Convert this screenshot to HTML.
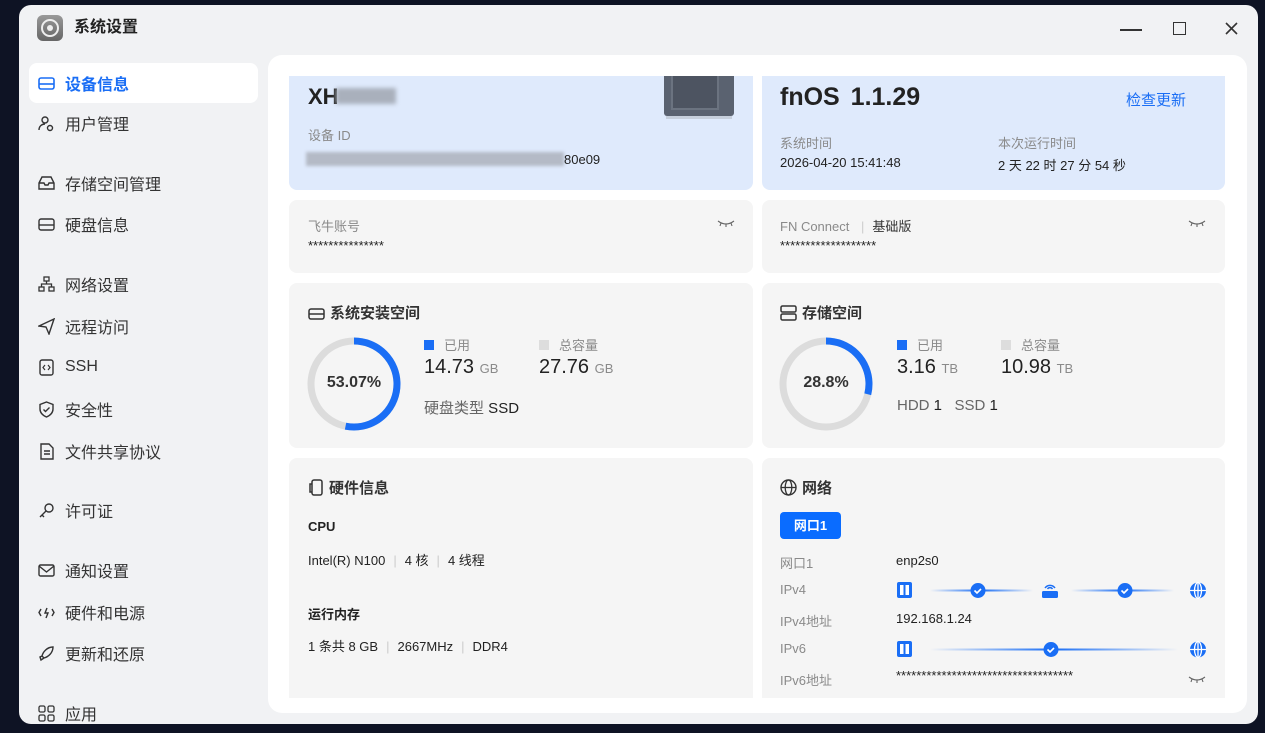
<!DOCTYPE html><html><head><meta charset="utf-8"><style>
*{margin:0;padding:0;box-sizing:border-box}
body{width:1265px;height:730px;overflow:hidden;background:#0e1324;font-family:"Liberation Sans","Noto Sans CJK SC",sans-serif;position:relative;color:#222}
.a{position:absolute}
.win{left:19px;top:5px;width:1239px;height:719px;background:#f1f2f4;border-radius:12px;overflow:hidden}
.nav{left:29px;width:229px;height:40px;border-radius:8px;font-size:16px;color:#333;display:flex;align-items:center;padding-left:36px}
.nav svg{position:absolute;left:9px;top:12px}
.panel{left:268px;top:55px;width:979px;height:658px;background:#fff;border-radius:14px;overflow:hidden}
.card{background:#f5f5f5;border-radius:8px}
.blue{background:#dfeafc}
.g{color:#8a8a8a}
.t{font-size:13px}
.h{font-size:15px;font-weight:bold;color:#333}
.h svg{vertical-align:-3px;margin-right:5px}
.sep{color:#ccc;margin:0 8px}
</style></head><body>
<div class="a win">
 <div class="a" style="left:18px;top:10px;width:26px;height:26px;border-radius:6px;background:linear-gradient(#999,#666)"><svg width="26" height="26"><circle cx="13" cy="13" r="8" fill="none" stroke="#eee" stroke-width="2"/><circle cx="13" cy="13" r="3" fill="#eee"/></svg></div>
 <div class="a" style="left:55px;top:14px;font-size:16px;font-weight:bold;line-height:18px">系统设置</div>
 <div class="a" style="left:1101px;top:24px;width:22px;height:2px;background:#333"></div>
 <div class="a" style="left:1154px;top:17px;width:13px;height:13px;border:1.6px solid #333"></div>
 <svg class="a" style="left:1206px;top:17px" width="13" height="13"><path d="M1 1l11 11M12 1L1 12" stroke="#333" stroke-width="1.6"/></svg>
</div>
<div class="a nav" style="top:63px;background:#fff;color:#1a6ef5;font-weight:bold"><svg width="17" height="15"><rect x="1" y="3" width="15" height="11" rx="2" fill="none" stroke="#1a6ef5" stroke-width="1.6"/><line x1="1" y1="9" x2="16" y2="9" stroke="#1a6ef5" stroke-width="1.6"/></svg>设备信息</div>
<div class="a nav" style="top:103px"><svg width="17" height="17"><circle cx="7" cy="5" r="3" fill="none" stroke="#333" stroke-width="1.4"/><path d="M1 15c0-4 3-6 6-6" fill="none" stroke="#333" stroke-width="1.4"/><circle cx="12" cy="13" r="2.5" fill="none" stroke="#333" stroke-width="1.4"/></svg>用户管理</div>
<div class="a nav" style="top:163px"><svg width="17" height="15"><path d="M1 8l3-6h9l3 6v6H1z M1 8h5l1 2h3l1-2h5" fill="none" stroke="#333" stroke-width="1.4"/></svg>存储空间管理</div>
<div class="a nav" style="top:204px"><svg width="17" height="15"><rect x="1" y="3" width="15" height="11" rx="2" fill="none" stroke="#333" stroke-width="1.4"/><line x1="1" y1="9" x2="16" y2="9" stroke="#333" stroke-width="1.4"/></svg>硬盘信息</div>
<div class="a nav" style="top:264px"><svg width="17" height="17"><rect x="6" y="1" width="5" height="4" fill="none" stroke="#333" stroke-width="1.3"/><rect x="1" y="11" width="5" height="4" fill="none" stroke="#333" stroke-width="1.3"/><rect x="11" y="11" width="5" height="4" fill="none" stroke="#333" stroke-width="1.3"/><path d="M8.5 5v3M3.5 11V8h10v3" fill="none" stroke="#333" stroke-width="1.3"/></svg>网络设置</div>
<div class="a nav" style="top:306px"><svg width="17" height="17"><path d="M1 8L16 1 11 16 8 9z" fill="none" stroke="#333" stroke-width="1.4"/></svg>远程访问</div>
<div class="a nav" style="top:347px"><svg width="17" height="17"><rect x="2" y="1" width="13" height="15" rx="2" fill="none" stroke="#333" stroke-width="1.4"/><path d="M7 6L5 8.5 7 11M10 6l2 2.5L10 11" fill="none" stroke="#333" stroke-width="1.2"/></svg>SSH</div>
<div class="a nav" style="top:389px"><svg width="17" height="17"><path d="M8.5 1L15 3.5V8c0 4-3 6.5-6.5 8C5 14.5 2 12 2 8V3.5z M5.5 8.5l2 2 4-4" fill="none" stroke="#333" stroke-width="1.4"/></svg>安全性</div>
<div class="a nav" style="top:431px"><svg width="17" height="17"><path d="M3 1h8l4 4v11H3z M6 8h6M6 11h6" fill="none" stroke="#333" stroke-width="1.4"/></svg>文件共享协议</div>
<div class="a nav" style="top:490px"><svg width="17" height="17"><circle cx="11" cy="6" r="4" fill="none" stroke="#333" stroke-width="1.4"/><path d="M8 9l-6 6M4 13l2 2" fill="none" stroke="#333" stroke-width="1.4"/></svg>许可证</div>
<div class="a nav" style="top:550px"><svg width="17" height="17"><rect x="1" y="3" width="15" height="11" rx="1.5" fill="none" stroke="#333" stroke-width="1.4"/><path d="M1 4l7.5 6L16 4" fill="none" stroke="#333" stroke-width="1.4"/></svg>通知设置</div>
<div class="a nav" style="top:592px"><svg width="17" height="17"><path d="M3 5L1 8.5 3 12M14 5l2 3.5L14 12M9 4L7 9h3l-2 5" fill="none" stroke="#333" stroke-width="1.4"/></svg>硬件和电源</div>
<div class="a nav" style="top:633px"><svg width="17" height="17"><path d="M15 2C9 2 5 7 4 11l2 2c4-1 9-5 9-11zM4 11l-2 1 1 3 3-2" fill="none" stroke="#333" stroke-width="1.4"/></svg>更新和还原</div>
<div class="a nav" style="top:693px"><svg width="17" height="17"><rect x="1" y="1" width="6" height="6" rx="1.5" fill="none" stroke="#333" stroke-width="1.3"/><rect x="10" y="1" width="6" height="6" rx="1.5" fill="none" stroke="#333" stroke-width="1.3"/><rect x="1" y="10" width="6" height="6" rx="1.5" fill="none" stroke="#333" stroke-width="1.3"/><rect x="10" y="10" width="6" height="6" rx="1.5" fill="none" stroke="#333" stroke-width="1.3"/></svg>应用</div>

<div class="a panel">
 <div class="a blue" style="left:21px;top:21px;width:464px;height:114px;border-radius:0 0 8px 8px"></div>
 <div class="a" style="left:40px;top:29px;font-size:22px;font-weight:bold">XH</div>
 <div class="a" style="left:68px;top:33px;width:60px;height:16px;background:#a9b0bc;filter:blur(2px)"></div>
 <div class="a g t" style="left:40px;top:70px">设备 ID</div>
 <div class="a" style="left:38px;top:97px;width:258px;height:14px;background:#b4bac6;filter:blur(1.5px)"></div>
 <div class="a t" style="left:296px;top:97px">80e09</div>
 <div class="a" style="left:396px;top:21px;width:70px;height:40px;background:#5a6270;border-radius:0 0 3px 3px"></div>
 <div class="a" style="left:403px;top:21px;width:48px;height:34px;background:#4d5461;border:2px solid #6b7380;border-top:none"></div>
 <div class="a" style="left:398px;top:61px;width:66px;height:3px;background:#c6cfdc"></div>
 <div class="a blue" style="left:494px;top:21px;width:463px;height:114px;border-radius:0 0 8px 8px"></div>
 <div class="a" style="left:512px;top:28px;font-size:25px;font-weight:bold;word-spacing:4px">fnOS 1.1.29</div>
 <div class="a" style="left:858px;top:34px;font-size:15px;color:#1a6ef5">检查更新</div>
 <div class="a g t" style="left:512px;top:78px">系统时间</div>
 <div class="a t" style="left:512px;top:100px">2026-04-20 15:41:48</div>
 <div class="a g t" style="left:730px;top:78px">本次运行时间</div>
 <div class="a t" style="left:730px;top:100px">2 天 22 时 27 分 54 秒</div>

 <div class="a card" style="left:21px;top:145px;width:464px;height:73px"></div>
 <div class="a g t" style="left:40px;top:161px">飞牛账号</div>
 <div class="a t" style="left:40px;top:183px">***************</div>
 <svg class="a" style="left:449px;top:164px" width="18" height="8"><path d="M1 2q8 6 16 0M4 4l-1 3M9 5v3M14 4l1 3" stroke="#666" stroke-width="1.1" fill="none"/></svg>
 <div class="a card" style="left:494px;top:145px;width:463px;height:73px"></div>
 <div class="a g t" style="left:512px;top:161px">FN Connect <span class="sep">|</span><span style="color:#333">基础版</span></div>
 <div class="a t" style="left:512px;top:183px">*******************</div>
 <svg class="a" style="left:920px;top:164px" width="18" height="8"><path d="M1 2q8 6 16 0M4 4l-1 3M9 5v3M14 4l1 3" stroke="#666" stroke-width="1.1" fill="none"/></svg>

 <div class="a card" style="left:21px;top:228px;width:464px;height:165px"></div>
 <div class="a h" style="left:40px;top:247px"><svg width="17" height="15"><rect x="1" y="3" width="15" height="10" rx="2" fill="none" stroke="#333" stroke-width="1.5"/><line x1="1" y1="8" x2="16" y2="8" stroke="#333" stroke-width="1.5"/></svg>系统安装空间</div>
 <svg class="a" style="left:38px;top:281px" width="96" height="96"><circle cx="48" cy="48" r="43" fill="none" stroke="#dcdcdc" stroke-width="7"/><circle cx="48" cy="48" r="43" fill="none" stroke="#1a6ef5" stroke-width="7" stroke-dasharray="143.4 270" transform="rotate(-90 48 48)"/></svg>
 <div class="a" style="left:38px;top:319px;width:96px;text-align:center;font-size:16px;font-weight:bold;color:#333">53.07%</div>
 <div class="a t g" style="left:156px;top:280px"><span style="display:inline-block;width:10px;height:10px;background:#1a6ef5;margin-right:10px"></span>已用</div>
 <div class="a t g" style="left:271px;top:280px"><span style="display:inline-block;width:10px;height:10px;background:#ddd;margin-right:10px"></span>总容量</div>
 <div class="a" style="left:156px;top:301px;font-size:20px">14.73 <span class="g t">GB</span></div>
 <div class="a" style="left:271px;top:301px;font-size:20px">27.76 <span class="g t">GB</span></div>
 <div class="a" style="left:156px;top:342px;font-size:15px"><span style="color:#666">硬盘类型</span> SSD</div>

 <div class="a card" style="left:494px;top:228px;width:463px;height:165px"></div>
 <div class="a h" style="left:512px;top:247px"><svg width="17" height="16"><rect x="1" y="1" width="15" height="6" rx="1.5" fill="none" stroke="#333" stroke-width="1.5"/><rect x="1" y="9" width="15" height="6" rx="1.5" fill="none" stroke="#333" stroke-width="1.5"/></svg>存储空间</div>
 <svg class="a" style="left:510px;top:281px" width="96" height="96"><circle cx="48" cy="48" r="43" fill="none" stroke="#dcdcdc" stroke-width="7"/><circle cx="48" cy="48" r="43" fill="none" stroke="#1a6ef5" stroke-width="7" stroke-dasharray="77.8 270" transform="rotate(-90 48 48)"/></svg>
 <div class="a" style="left:510px;top:319px;width:96px;text-align:center;font-size:16px;font-weight:bold;color:#333">28.8%</div>
 <div class="a t g" style="left:629px;top:280px"><span style="display:inline-block;width:10px;height:10px;background:#1a6ef5;margin-right:10px"></span>已用</div>
 <div class="a t g" style="left:733px;top:280px"><span style="display:inline-block;width:10px;height:10px;background:#ddd;margin-right:10px"></span>总容量</div>
 <div class="a" style="left:629px;top:301px;font-size:20px">3.16 <span class="g t">TB</span></div>
 <div class="a" style="left:733px;top:301px;font-size:20px">10.98 <span class="g t">TB</span></div>
 <div class="a" style="left:629px;top:342px;font-size:15px"><span style="color:#666">HDD</span> 1 &nbsp;&nbsp;<span style="color:#666">SSD</span> 1</div>

 <div class="a card" style="left:21px;top:403px;width:464px;height:240px;border-radius:8px 8px 0 0"></div>
 <div class="a h" style="left:40px;top:422px"><svg width="16" height="17"><rect x="4" y="1" width="10" height="15" rx="2" fill="none" stroke="#333" stroke-width="1.5"/><path d="M4 5H2v8h2" fill="none" stroke="#333" stroke-width="1.5"/></svg>硬件信息</div>
 <div class="a" style="left:40px;top:464px;font-size:13px;font-weight:bold">CPU</div>
 <div class="a t" style="left:40px;top:495px">Intel(R) N100<span class="sep">|</span>4 核<span class="sep">|</span>4 线程</div>
 <div class="a" style="left:40px;top:549px;font-size:13px;font-weight:bold">运行内存</div>
 <div class="a t" style="left:40px;top:581px">1 条共 8 GB<span class="sep">|</span>2667MHz<span class="sep">|</span>DDR4</div>

 <div class="a card" style="left:494px;top:403px;width:463px;height:240px;border-radius:8px 8px 0 0"></div>
 <div class="a h" style="left:512px;top:422px"><svg width="17" height="17"><circle cx="8.5" cy="8.5" r="7.5" fill="none" stroke="#333" stroke-width="1.4"/><ellipse cx="8.5" cy="8.5" rx="3.3" ry="7.5" fill="none" stroke="#333" stroke-width="1.3"/><path d="M1 8.5h15" stroke="#333" stroke-width="1.3"/></svg>网络</div>
 <div class="a" style="left:512px;top:457px;width:61px;height:27px;background:#0a6cff;border-radius:4px;color:#fff;font-size:13px;font-weight:bold;text-align:center;line-height:27px">网口1</div>
 <div class="a g t" style="left:512px;top:498px">网口1</div><div class="a t" style="left:628px;top:498px">enp2s0</div>
 <div class="a g t" style="left:512px;top:527px">IPv4</div>
 <div class="a g t" style="left:512px;top:556px">IPv4地址</div><div class="a t" style="left:628px;top:556px">192.168.1.24</div>
 <div class="a g t" style="left:512px;top:586px">IPv6</div>
 <div class="a g t" style="left:512px;top:615px">IPv6地址</div><div class="a t" style="left:628px;top:613px">***********************************</div>
 <svg class="a" style="left:628px;top:525px" width="315" height="80">
  <defs><linearGradient id="l"><stop offset="0" stop-color="#1a6ef5" stop-opacity="0"/><stop offset=".5" stop-color="#1a6ef5"/><stop offset="1" stop-color="#1a6ef5" stop-opacity="0"/></linearGradient></defs>
  <rect x="1" y="2" width="15" height="16" rx="2" fill="#1a6ef5"/><rect x="4" y="5" width="3.5" height="10" fill="#fff"/><rect x="9.5" y="5" width="3.5" height="10" fill="#fff"/>
  <rect x="34" y="9.5" width="103" height="2" fill="url(#l)"/><circle cx="82" cy="10.5" r="7.5" fill="#1a6ef5"/><path d="M78.5 10.5l2.5 2.5 4-4" stroke="#fff" stroke-width="1.6" fill="none"/>
  <rect x="146" y="11" width="16" height="7" rx="1.5" fill="#1a6ef5"/><path d="M149 8a6 6 0 0 1 10 0M151.5 9a3 3 0 0 1 5 0" stroke="#1a6ef5" stroke-width="1.5" fill="none"/>
  <rect x="175" y="9.5" width="103" height="2" fill="url(#l)"/><circle cx="229" cy="10.5" r="7.5" fill="#1a6ef5"/><path d="M225.5 10.5l2.5 2.5 4-4" stroke="#fff" stroke-width="1.6" fill="none"/>
  <circle cx="302" cy="10.5" r="8" fill="#1a6ef5"/><path d="M294 10.5h16M302 2.5v16" stroke="#fff" stroke-width="1.3"/><ellipse cx="302" cy="10.5" rx="3.5" ry="8" fill="none" stroke="#fff" stroke-width="1.3"/>
  <g transform="translate(0,59)"><rect x="1" y="2" width="15" height="16" rx="2" fill="#1a6ef5"/><rect x="4" y="5" width="3.5" height="10" fill="#fff"/><rect x="9.5" y="5" width="3.5" height="10" fill="#fff"/>
  <rect x="34" y="9.5" width="248" height="2" fill="url(#l)"/><circle cx="155" cy="10.5" r="7.5" fill="#1a6ef5"/><path d="M151.5 10.5l2.5 2.5 4-4" stroke="#fff" stroke-width="1.6" fill="none"/>
  <circle cx="302" cy="10.5" r="8" fill="#1a6ef5"/><path d="M294 10.5h16M302 2.5v16" stroke="#fff" stroke-width="1.3"/><ellipse cx="302" cy="10.5" rx="3.5" ry="8" fill="none" stroke="#fff" stroke-width="1.3"/></g>
 </svg>
 <svg class="a" style="left:920px;top:620px" width="18" height="8"><path d="M1 2q8 6 16 0M4 4l-1 3M9 5v3M14 4l1 3" stroke="#666" stroke-width="1.1" fill="none"/></svg>
</div>
</body></html>
